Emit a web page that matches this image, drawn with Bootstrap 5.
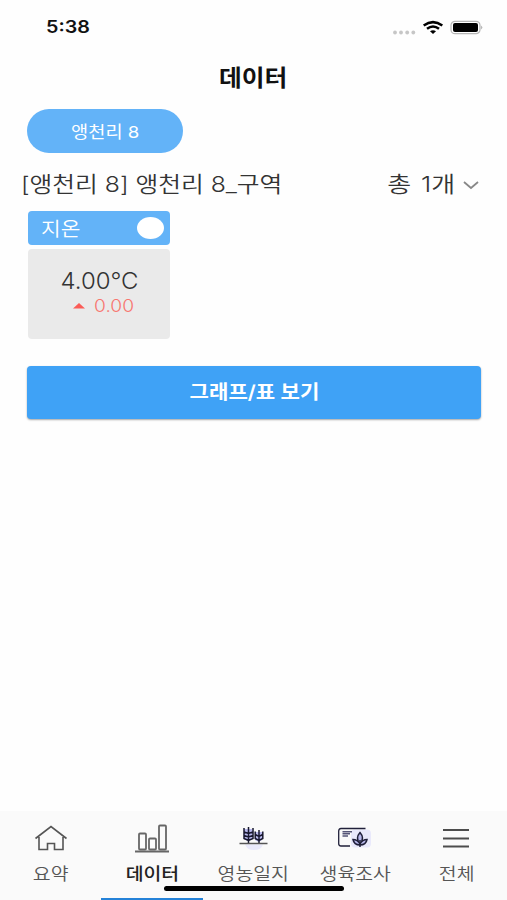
<!DOCTYPE html>
<html lang="ko">
<head>
<meta charset="utf-8">
<meta name="viewport" content="width=device-width, initial-scale=1">
<title>데이터</title>
<link href="https://cdn.jsdelivr.net/npm/bootstrap@5.3.0/dist/css/bootstrap.min.css" rel="stylesheet">
<style>
body { font-family: Inter, "Noto Sans CJK KR", sans-serif; background: #fefefe; color: #333; }
.screen { height: 900px; overflow: hidden; }
.wide { display: inline-block; white-space: nowrap; line-height: 1; transform: scaleX(var(--sx, 1)); transform-origin: var(--ox, center); }
.from-start { --ox: left; }
.from-end { --ox: right; }
.status-bar { height: 54px; padding: 1px 24px 0 46px; }
.clock { font: 600 17px/1 Inter, sans-serif; color: #111; --sx: 1.16; }
.title-bar { height: 46px; padding-top: 2px; }
.title-bar h1 { font-size: 22.5px; font-weight: 700; color: #111; --sx: 1.1; }
.farm-pill { width: 156px; height: 44px; margin: 9px 0 0 27px; padding-top: 2px; background: #63b3f8; color: #fff; }
.farm-pill .wide { font-size: 16.5px; --sx: 1.13; }
.zone-row { height: 58px; padding: 6px 28px 0 21px; }
.zone-name { font-size: 21.5px; font-weight: 350; --sx: 1.15; }
.zone-count { font-size: 21.5px; font-weight: 350; word-spacing: 2px; --sx: 1.21; }
.sensor { width: 142px; margin-left: 28px; }
.sensor-head { height: 34px; padding: 0 6px 0 13px; background: #63b3f8; color: #fff; border-radius: 4px; }
.sensor-head .wide { font-size: 19.5px; font-weight: 350; margin-top: 3px; --sx: 1.1; }
.knob { width: 27px; height: 22px; background: #fff; border-radius: 50%; }
.sensor-body { height: 90px; margin-top: 4px; padding-top: 21px; background: #eaeaea; border-radius: 4px; }
.reading { font-size: 23px; font-weight: 300; --sx: 1.04; }
.delta { font-size: 17px; font-weight: 300; line-height: 18px; color: #f87670; --sx: 1.13; }
.delta-row { padding-left: 5px; margin-top: 4px; gap: 9px; }
.chart-btn { height: 53px; margin: 27px 26px 0 27px; background: #3fa2f6; color: #fff; border: 0; border-radius: 4px; box-shadow: 0 1px 2px rgba(0,0,0,.35); }
.chart-btn .wide { font-size: 19px; font-weight: 600; margin-top: 1px; --sx: 1.11; }
.tab-bar { height: 89px; background: #fafafa; }
.tab { height: 89px; padding-top: 9px; color: #555; text-decoration: none; }
.tab svg { display: block; }
.tab .wide { font-size: 17px; margin-top: 10px; --sx: 1.14; font-weight: 350; }
.tab.current { color: #222; border-bottom: 2.5px solid #2482d8; }
.tab.current .wide { font-weight: 500; }
.home-line { left: 164px; top: 75px; width: 180px; height: 5px; background: #000; border-radius: 3px; }
</style>
</head>
<body>
<div class="screen d-flex flex-column">
  <header>
    <div class="status-bar d-flex align-items-center justify-content-between">
      <span class="wide from-start clock">5:38</span>
      <svg width="92" height="16" viewBox="0 0 92 16">
        <g fill="#c6c6c6"><circle cx="4" cy="12.500" r="1.900"/><circle cx="10" cy="12.500" r="1.900"/><circle cx="16.200" cy="12.500" r="1.900"/><circle cx="22.300" cy="12.500" r="1.900"/></g>
        <g fill="none" stroke="#000" stroke-width="2.500"><path d="M32.700 5.400Q42 -1.200 51.300 5.400"/><path d="M36 8.800Q42 4.300 48 8.800"/></g>
        <path d="M39 11.200Q42 9.200 45 11.200L42 14Z"/>
        <rect x="60" y="1.300" width="29" height="12.400" rx="4" fill="#fff" stroke="#b5b5b5" stroke-width="1.200"/>
        <rect x="62" y="3" width="25" height="9" rx="2"/>
        <path d="M90.300 5.500Q92.200 7.500 90.300 9.500Z" fill="#999"/>
      </svg>
    </div>
    <div class="title-bar d-flex align-items-center justify-content-center"><h1 class="wide m-0">데이터</h1></div>
  </header>
  <main class="flex-grow-1">
    <div class="farm-pill rounded-pill d-flex align-items-center justify-content-center"><span class="wide">앵천리 8</span></div>
    <div class="zone-row d-flex align-items-center justify-content-between">
      <span class="wide from-start zone-name">[앵천리 8] 앵천리 8_구역</span>
      <span class="d-flex align-items-center gap-2">
        <span class="wide from-end zone-count">총 1개</span>
        <svg width="16" height="10" viewBox="0 0 16 10" fill="none" stroke="#888" stroke-width="1.800"><path d="M1 2L8 8L15 2"/></svg>
      </span>
    </div>
    <section class="sensor">
      <div class="sensor-head d-flex align-items-center justify-content-between"><span class="wide from-start">지온</span><span class="knob"></span></div>
      <div class="sensor-body d-flex flex-column align-items-center">
        <span class="wide reading">4.00°C</span>
        <span class="delta-row d-flex align-items-center">
          <svg width="12" height="6" viewBox="0 0 12 6" fill="#fb5c57"><path d="M0 5.500L6 0L12 5.500Z"/></svg>
          <span class="wide from-start delta">0.00</span>
        </span>
      </div>
    </section>
    <div class="d-grid"><button type="button" class="chart-btn btn p-0"><span class="wide">그래프/표 보기</span></button></div>
  </main>
  <nav class="tab-bar position-relative">
    <div class="row row-cols-5 g-0">
      <a href="#" class="col tab d-flex flex-column align-items-center">
        <svg width="34" height="36" viewBox="0 0 34 36" fill="none" stroke="#555" stroke-width="1.600"><path d="M1.500 18.500L17 6.500L32.500 18.500M5 17V29.500H13.500V23.500H20.500V29.500H29V17"/></svg>
        <span class="wide">요약</span>
      </a>
      <a href="#" class="col tab current d-flex flex-column align-items-center">
        <svg width="36" height="36" viewBox="0 0 36 36" fill="none" stroke="#666" stroke-width="1.800"><rect x="5" y="13.500" width="7" height="16" rx="1"/><rect x="15" y="18.500" width="7" height="11" rx="1"/><rect x="25" y="5.500" width="7" height="24" rx="1"/><path d="M1 31.500H35"/></svg>
        <span class="wide">데이터</span>
      </a>
      <a href="#" class="col tab d-flex flex-column align-items-center">
        <svg width="30" height="36" viewBox="0 0 30 36" fill="none" stroke="#17172f">
          <path d="M7 24.500H25Q23 30 16 30Q9 30 7 24.500Z" fill="#e9e9fb" stroke="none"/>
          <path d="M6 9H14V19L10 21L6 19ZM17 12H24V20L20.500 22L17 20Z" fill="#b9b9ec" stroke="none"/>
          <path stroke-width="1.500" d="M10.500 7V23M6 8V18.500L10.500 20.500L15 18.500V8M6 12L10.500 13.500L15 12M6 15.500L10.500 17L15 15.500M21 10V23M17.200 11.500V18.500L21 20.500L24.800 18.500V11.500M17.200 14.500L21 16.500L24.800 14.500"/>
          <path stroke="#555" stroke-width="1.500" d="M1.500 23.500H29.500"/>
        </svg>
        <span class="wide">영농일지</span>
      </a>
      <a href="#" class="col tab d-flex flex-column align-items-center">
        <svg width="36" height="36" viewBox="0 0 36 36" fill="none" stroke="#20203a">
          <rect x="14" y="9.500" width="20" height="18" rx="4" fill="#e9e9fb" stroke="none"/>
          <path stroke-width="1.300" d="M28.500 8.500H4Q1.700 8.500 1.700 11V23.500Q1.700 26 4 26H13"/>
          <path stroke="#555577" stroke-width="1.500" d="M5.500 11.700H15M5.500 13.800H13M5.500 16H11"/>
          <path fill="#b9b9ec" stroke-width="1.500" d="M23 12.500Q18 18 23 24Q28 18 23 12.500ZM23 24Q20.500 19.500 16 19.500Q17 25 23 25Q29 25 30 19.500Q25.500 19.500 23 24Z"/><path stroke-width="1.500" d="M23 20V27"/>
        </svg>
        <span class="wide">생육조사</span>
      </a>
      <a href="#" class="col tab d-flex flex-column align-items-center">
        <svg width="28" height="36" viewBox="0 0 28 36" fill="none" stroke="#4c4c4c" stroke-width="2"><path d="M1 10H27M1 18.500H27M1 26.500H27"/></svg>
        <span class="wide">전체</span>
      </a>
    </div>
    <div class="home-line position-absolute"></div>
  </nav>
</div>
<script src="https://cdn.jsdelivr.net/npm/bootstrap@5.3.0/dist/js/bootstrap.bundle.min.js"></script>
</body>
</html>
